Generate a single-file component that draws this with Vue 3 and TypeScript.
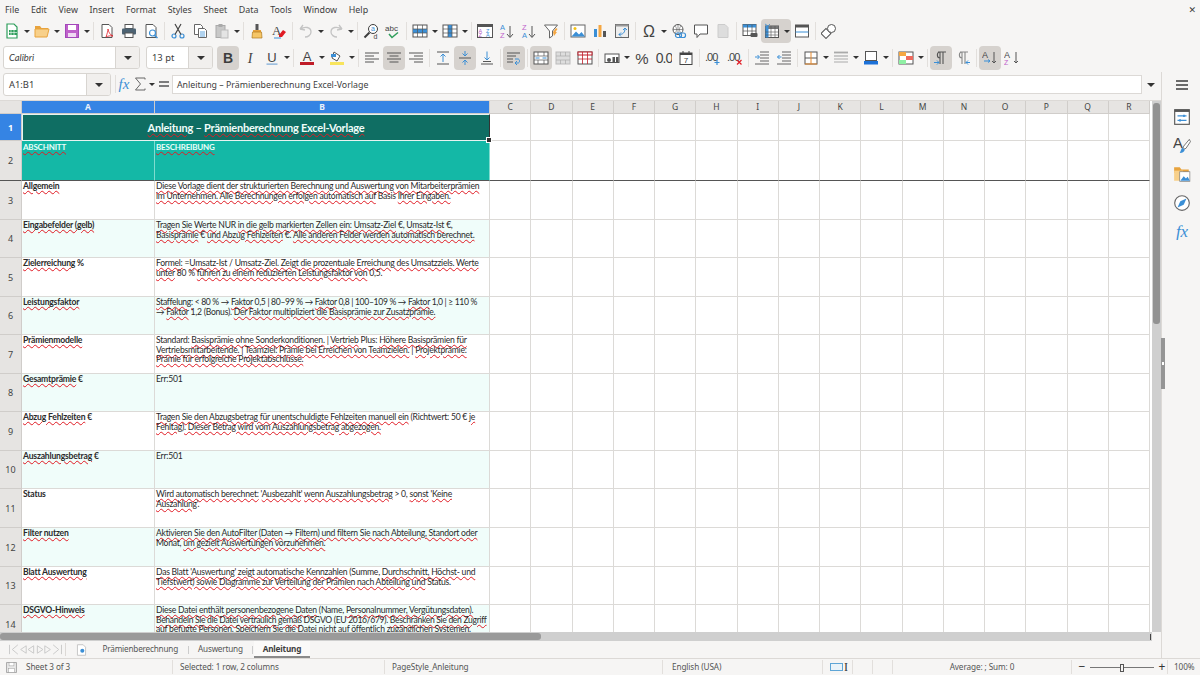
<script setup lang="ts">
type ToolItem = { i?: string; a?: boolean; on?: boolean; sep?: boolean }

const menus = ['File', 'Edit', 'View', 'Insert', 'Format', 'Styles', 'Sheet', 'Data', 'Tools', 'Window', 'Help']

const S = '#3d3d3d'
const B = '#3b8fd6'
const line = (d: string, c = S, w = 1) => `<path d="${d}" fill="none" stroke="${c}" stroke-width="${w}"/>`
const doc = (c = '#555', f = '#fff') => `<path d="M3 1.5h7l3 3v10H3z" fill="${f}" stroke="${c}"/>`

const icons: Record<string, string> = {
  new: `<path d="M3 1h7l3 3v11H3z" fill="#fff" stroke="#2e9e5b" stroke-width="1.2"/><rect x="5" y="7" width="8" height="5" fill="#2e9e5b"/>` + line('M7 7v5M10 7v5M5 9.5h8', '#fff', .6),
  open: `<path d="M1 3h5l1.500 2H14v2H1z" fill="#e8a33d"/><path d="M1 14V6h14l-2 8z" fill="#f8d08a" stroke="#e8a33d"/>`,
  save: `<rect x="1.500" y="1.500" width="13" height="13" fill="#c061cb" stroke="#a347ba"/><rect x="4" y="2" width="8" height="5" fill="#fff"/><rect x="4" y="10" width="8" height="4" fill="#f0d9f3"/>`,
  pdf: doc() + line('M7 14c1-3 2-6 2-8 .5 3 2 6 5 7-3-.5-5 0-7 1z', '#e01b24', .8),
  print: `<rect x="4" y="1.500" width="8" height="4" fill="#fff" stroke="#555"/><rect x="1" y="5.500" width="14" height="6" rx="1" fill="#4d6373"/><rect x="4" y="10" width="8" height="4.500" fill="#fff" stroke="#555"/>`,
  preview: doc() + `<circle cx="9.500" cy="10" r="3" fill="#fff" stroke="${B}" stroke-width="1.200"/>` + line('M11.500 12.500l3 2.500', B, 1.5),
  cut: `<circle cx="4" cy="13" r="2" fill="none" stroke="${B}" stroke-width="1.200"/><circle cx="12" cy="13" r="2" fill="none" stroke="${B}" stroke-width="1.200"/>` + line('M5 11.500L11 1M11 11.500L5 1', '#444', 1.2),
  copy: `<path d="M2.500 1.500h6l2 2v8h-8z" fill="#fff" stroke="#666"/><path d="M6.500 5.500h6l2 2v7h-8z" fill="#fff" stroke="#666"/>` + line('M8 9h5M8 11h5M8 13h5', B, .8),
  paste: `<rect x="2" y="2.500" width="9" height="12" fill="#c8c8c8" stroke="#aaa"/><rect x="4.500" y="1" width="4" height="3" fill="#aaa"/><rect x="7" y="7" width="7" height="8" fill="#e4e4e4" stroke="#bbb"/>`,
  clone: `<rect x="6.500" y="1" width="3" height="6" fill="#555"/><path d="M4 7h8v2H4z" fill="#e8a33d"/><path d="M3.500 9h9l.5 6H3z" fill="#f6c667" stroke="#b07a1e" stroke-width=".7"/>`,
  clear: `<text x="1" y="12" font-size="13" font-family="Liberation Serif" fill="#444">A</text><path d="M8 12l4-5 3 2-4 5H8z" fill="#e01b24"/>` + line('M3 15h7', B, 1),
  undo: line('M2 6l3-4M2 6l5 1M2 6c5-3 11-2 11 3 0 3-3 5-6 5', '#c4c4c4', 1.300),
  redo: line('M14 6l-3-4M14 6l-5 1M14 6C9 3 3 4 3 9c0 3 3 5 6 5', '#c4c4c4', 1.300),
  find: `<circle cx="10" cy="6" r="4.500" fill="#fff" stroke="#3d3d3d"/>` + line('M6.500 9.500L1.500 14.500', S, 2) + `<text x="8" y="8" font-size="7" fill="${B}" font-family="Liberation Sans">a</text><text x="10.500" y="15.500" font-size="7" fill="#444" font-family="Liberation Sans">d</text>`,
  spell: `<text x="0" y="8" font-size="8" fill="#444" font-family="Liberation Sans">abc</text>` + line('M4 11l3 3.500 6-5', '#2e9e5b', 1.5),
  row: `<rect x="1" y="2" width="14" height="12" fill="#fff" stroke="#555"/><rect x="1" y="6" width="14" height="4" fill="${B}"/>` + line('M1 6h14M1 10h14M5.500 2v12M10.500 2v12', '#555', .7),
  col: `<rect x="1" y="2" width="14" height="12" fill="#fff" stroke="#555"/><rect x="6" y="2" width="4" height="12" fill="${B}"/>` + line('M1 6h14M1 10h14M6 2v12M10 2v12', '#555', .7),
  sort: `<rect x=".5" y="1.500" width="15" height="13" fill="#fff" stroke="#555"/><rect x=".5" y="1.500" width="15" height="2.500" fill="#555"/><text x="1.500" y="9.500" font-size="5.500" fill="#b55cc7" font-family="Liberation Sans">A</text><text x="1.500" y="14" font-size="5.500" fill="#b55cc7" font-family="Liberation Sans">Z</text><text x="9" y="9.500" font-size="5.500" fill="${B}" font-family="Liberation Sans">Z</text><text x="9" y="14" font-size="5.500" fill="${B}" font-family="Liberation Sans">A</text>`,
  asc: `<text x="1" y="7" font-size="7.500" fill="${B}" font-family="Liberation Sans">A</text><text x="1" y="15" font-size="7.500" fill="#c061cb" font-family="Liberation Sans">Z</text>` + line('M11 3v11M8 11l3 3.500 3-3.500', '#555', 1),
  desc: `<text x="1" y="7" font-size="7.500" fill="#c061cb" font-family="Liberation Sans">Z</text><text x="1" y="15" font-size="7.500" fill="${B}" font-family="Liberation Sans">A</text>` + line('M11 3v11M8 11l3 3.500 3-3.500', '#555', 1),
  filter: `<path d="M1.500 2h13l-5 6v5l-3 2V8z" fill="#fff" stroke="#666"/><path d="M10 9l3-4 1.500 1-2 3 1.500 0-3 4z" fill="#f5a742"/>`,
  image: `<rect x="1" y="2" width="14" height="12" fill="#fff" stroke="#666"/><circle cx="5" cy="5.500" r="1.500" fill="#f5c211"/><path d="M1.500 13.500l4.500-5 3 3 2.500-2.500 3.500 4.500z" fill="${B}"/>`,
  chart: `<rect x="2" y="6" width="3" height="8" fill="${B}"/><rect x="6.500" y="2" width="3" height="12" fill="#f5a742"/><rect x="11" y="8" width="3" height="6" fill="#555"/>`,
  pivot: `<rect x="1.500" y="1.500" width="13" height="13" fill="#eee" stroke="#666"/><rect x="1.500" y="1.500" width="13" height="2" fill="#999"/>` + line('M5 11.500c4 0 6-2 6-6M9 7l2-2 2 2M7 9.500l-2 2 2 2', B, 1),
  omega: `<text x="8" y="14" text-anchor="middle" font-size="16" fill="#444" font-family="Liberation Sans">Ω</text>`,
  link: `<circle cx="7" cy="6.500" r="5" fill="#fff" stroke="#555"/>` + line('M2 6.500h10M7 1.500v10M4 2.500c2 3 2 5 0 8M10 2.500c-2 3-2 5 0 8', '#555', .6) + `<rect x="4.500" y="10" width="6" height="4.500" rx="2" fill="none" stroke="${B}" stroke-width="1.200"/><rect x="8.500" y="10" width="6" height="4.500" rx="2" fill="none" stroke="${B}" stroke-width="1.200"/>`,
  comment: `<path d="M1.500 2h13v9H7l-3 3.500V11H1.500z" fill="#fff" stroke="#555"/>`,
  headers: `<path d="M3 1.500h7l3 3v10H3z" fill="#ddd" stroke="#ccc"/>`,
  headgrid: `<rect x="1" y="1.500" width="13" height="11" fill="#fff" stroke="#555"/><rect x="1" y="1.500" width="13" height="3" fill="${B}"/>` + line('M1 8h13M5.500 2v10M10 2v10', '#555', .7) + `<rect x="8.500" y="10" width="7" height="4" rx="1" fill="#555"/>`,
  freeze: `<rect x="1.500" y="3" width="13" height="11.500" fill="#fff" stroke="#555"/><rect x="1.500" y="3" width="13" height="3" fill="#777"/><rect x="1.500" y="3" width="3" height="11.500" fill="${B}"/>` + line('M1.500 9h13M1.500 12h13M7 3v11M11 3v11', '#555', .6) + line('M1 1l3 2M6 1l-2 2', B, .8),
  split: `<rect x="1.500" y="2" width="13" height="12" fill="#fff" stroke="#555"/><rect x="1.500" y="2" width="13" height="2.500" fill="#555"/>` + line('M1.500 9h13', B, 1),
  shapes: `<rect x="1.500" y="7" width="7" height="7" fill="#fff" stroke="#555" transform="rotate(45 5 10.500)"/><circle cx="10.500" cy="5.500" r="4" fill="#fff" stroke="#555"/>`,
  bold: `<text x="8" y="13" text-anchor="middle" font-size="14" font-weight="700" fill="#3d3d3d" font-family="Liberation Sans">B</text>`,
  italic: `<text x="8" y="13" text-anchor="middle" font-size="14" font-style="italic" fill="#444" font-family="Liberation Serif">I</text>`,
  under: `<text x="8" y="12" text-anchor="middle" font-size="13" fill="#444" font-family="Liberation Sans">U</text><rect x="2.500" y="13.500" width="11" height="1.200" fill="#7aa9d6"/>`,
  fcolor: `<text x="8" y="11" text-anchor="middle" font-size="13" fill="#444" font-family="Liberation Sans">A</text><rect x="1" y="12" width="14" height="3" fill="#c01c28"/>`,
  bcolor: `<path d="M5 2l6 4-3 5-5-3z" fill="#fff" stroke="#555"/><path d="M2 4h5v3H2z" fill="${B}"/><rect x="1" y="12" width="14" height="3" fill="#f8e45c"/>`,
  left: line('M1 3h14M1 6h9M1 9h14M1 12h9', '#555'),
  center: line('M1 3h14M3.500 6h9M1 9h14M3.500 12h9', '#555'),
  right: line('M1 3h14M6 6h9M1 9h14M6 12h9', '#555'),
  vtop: line('M2 2h12M2 14h12', '#555') + line('M8 12V4M5.500 6.500L8 4l2.500 2.500', B),
  vmid: line('M2 8h12', '#555') + line('M8 1v5M5.500 3.500L8 6l2.500-2.500M8 15v-5M5.500 12.500L8 10l2.500 2.500', B),
  vbot: line('M2 14h12M4 11.500h8', '#555') + line('M8 1.500V10M5.500 7.500L8 10l2.500-2.500', B),
  wrap: line('M1 3h13M1 6h9M1 9h6M1 12h6', '#555') + line('M9 9h3c2 0 2 4 0 4H9.500M11 11l-2 2 2 2', B),
  merge: `<rect x="1" y="2" width="14" height="12" fill="#fff" stroke="#555"/>` + line('M1 6h14M1 10h14M5 2v4M11 2v4M5 10v4M11 10v4', '#555', .7) + line('M2.500 8h4M13.500 8h-4', B, 1.2),
  mergec: `<rect x="1" y="2" width="14" height="12" fill="#ddd" stroke="#bbb"/>` + line('M1 6h14M1 10h14M5.500 2v4M10.500 2v4M5.500 10v4M10.500 10v4', '#aaa', .7),
  unmerge: `<rect x="1" y="2" width="14" height="12" fill="#fff" stroke="#555"/><rect x="1" y="2" width="14" height="3" fill="#fff" stroke="#c01c28"/>` + line('M1 9h14M5.500 2v12M10.500 2v12', '#c01c28', .8),
  cur: `<rect x="1" y="4" width="14" height="8.500" fill="#fff" stroke="#555"/><circle cx="5" cy="10" r="2" fill="#555"/><rect x="8.500" y="7" width="2.500" height="5" fill="#555"/><rect x="12" y="7" width="2.500" height="5" fill="#555"/>`,
  pct: `<text x="8" y="13.500" text-anchor="middle" font-size="15" fill="#444" font-family="Liberation Sans">%</text>`,
  num: `<text x="8" y="13" text-anchor="middle" font-size="14" letter-spacing="-1" fill="#444" font-family="Liberation Sans">0.0</text>`,
  date: `<rect x="2" y="3" width="12" height="11.500" fill="#fff" stroke="#444"/><rect x="2" y="3" width="12" height="2" fill="#444"/><text x="8" y="13" text-anchor="middle" font-size="8" fill="#444" font-family="Liberation Sans">7</text>` + line('M5 1v3M11 1v3', '#444'),
  adddec: `<text x="0" y="11" font-size="11" letter-spacing="-1" fill="#444" font-family="Liberation Sans">.00</text>` + line('M12 10v5M9.500 12.500h5', B, 1.2),
  deldec: `<text x="0" y="11" font-size="11" letter-spacing="-1" fill="#444" font-family="Liberation Sans">.00</text>` + line('M10 10l4.500 4.500M14.500 10L10 14.500', '#e01b24', 1.2),
  indent: line('M6 2h9M6 5h9M6 8h9M6 11h9M1 14h14', '#555', .9) + line('M1 7h4M3.500 5l2 2-2 2', B),
  outdent: line('M6 2h9M6 5h9M6 8h9M6 11h9M1 14h14', '#555', .9) + line('M5.500 7h-4M3.500 5l-2 2 2 2', B),
  border: `<rect x="2" y="2" width="12" height="12" fill="#fff" stroke="#555"/>` + line('M2 8h12', '#555') + line('M8 2v12M2 14h12', '#e68a2e', 1),
  bstyle: line('M1 2.500h14', '#aaa', 1.800) + line('M1 6h14', '#aaa', 1.200) + line('M1 9h14M1 12h14', '#aaa', 1),
  bcol: `<rect x="2.500" y="1.500" width="11" height="9" fill="#fff" stroke="#555"/><rect x="1" y="11" width="14" height="3.500" fill="#1c71d8"/>`,
  cond: `<rect x="1" y="2" width="14" height="12" fill="#fff" stroke="#555"/><rect x="1" y="2" width="7" height="4" fill="#f5a742"/><rect x="8" y="6" width="7" height="4" fill="#ed6a5e"/><rect x="1" y="10" width="7" height="4" fill="#8ff0a4"/>`,
  ltr: line('M7 14V2M10 14V2M5 2h8M7 8C3.500 8 3.500 2 7 2', '#555', 1.1) + line('M1 12.500h5M4 10.500l2 2-2 2', B),
  rtl: line('M7 14V2M10 14V2M5 2h8M7 8C3.500 8 3.500 2 7 2', '#888', 1.1) + line('M15 12.500h-4M13 10.500l-2 2 2 2', B),
  textdir: `<text x="0" y="8" font-size="9" fill="#444" font-family="Liberation Sans">A</text>` + line('M2 11h6M6 9.500l2 1.500-2 1.500', B) + line('M12 2v11M10 11l2 2 2-2', '#555'),
  textdir2: `<text x="0" y="8" font-size="9" fill="#444" font-family="Liberation Sans">A</text><text x="0" y="15" font-size="7" fill="#c061cb" font-family="Liberation Sans">Z</text>` + line('M12 2v11M10 11l2 2 2-2', '#555'),
  menu: line('M2 4h12M2 8h12M2 12h12', '#3d3d3d', 1.500),
  props: `<rect x="1.500" y="1.500" width="13" height="13" fill="#fff" stroke="#555"/><rect x="1.500" y="1.500" width="13" height="2" fill="#555"/>` + line('M4 7h8M4 11h8', B) + `<rect x="9" y="6" width="1.500" height="2" fill="${B}"/><rect x="5.500" y="10" width="1.500" height="2" fill="${B}"/>`,
  styles: `<text x="0" y="11" font-size="13" fill="#444" font-family="Liberation Sans">A</text><path d="M14.500 3l-5 6-1 3 3-1 4-6z" fill="#fff" stroke="#555" stroke-width=".7"/><path d="M6 15c3 0 4-1 4.500-3L8 10.500z" fill="${B}"/>`,
  gallery: `<path d="M1 2h5l1.500 2H14v3H1z" fill="#e8a33d"/><path d="M1 14V5h8v9z" fill="#f8d08a"/><rect x="6" y="6" width="9" height="8.500" fill="#fff" stroke="#777" stroke-width=".6"/><path d="M6.500 14l3-4 2 2 1.500-1.500 2 3.500z" fill="${B}"/>`,
  nav: `<circle cx="8" cy="8" r="6.500" fill="#fff" stroke="#666"/><path d="M12 4L9.500 9.500 4 12l2.500-5.500z" fill="${B}"/>`,
  fx: `<text x="8" y="13" text-anchor="middle" font-size="15" font-style="italic" fill="${B}" font-family="Liberation Serif">fx</text>`,
  sigma: line('M13 3.500V2H3.500L8.500 8l-5 6H13v-1.500', '#666', 1),
  equals: line('M3 6h10M3 10h10', '#555', 1.500),
  savest: `<rect x="2" y="2" width="12" height="12" fill="#e8e8e8" stroke="#999"/><rect x="5" y="2" width="6" height="4" fill="#fff" stroke="#999" stroke-width=".6"/><rect x="4.500" y="9" width="7" height="5" fill="#fff" stroke="#999" stroke-width=".6"/>`,
  addtab: `<path d="M3 1.500h7l3 3v10H3z" fill="#fff" stroke="#bbb"/><circle cx="9" cy="9" r="2.500" fill="${B}"/>`,
}

const sep: ToolItem = { sep: true }
const tools1: ToolItem[] = [
  { i: 'new', a: true }, { i: 'open', a: true }, { i: 'save', a: true }, sep,
  { i: 'pdf' }, { i: 'print' }, { i: 'preview' }, sep,
  { i: 'cut' }, { i: 'copy' }, { i: 'paste', a: true }, sep,
  { i: 'clone' }, { i: 'clear' }, sep,
  { i: 'undo', a: true }, { i: 'redo', a: true }, sep,
  { i: 'find' }, { i: 'spell' }, sep,
  { i: 'row', a: true }, { i: 'col', a: true }, sep,
  { i: 'sort' }, { i: 'asc' }, { i: 'desc' }, { i: 'filter' }, sep,
  { i: 'image' }, { i: 'chart' }, { i: 'pivot' }, sep,
  { i: 'omega', a: true }, { i: 'link' }, { i: 'comment' }, { i: 'headers' }, sep,
  { i: 'headgrid' }, { i: 'freeze', a: true, on: true }, { i: 'split' }, sep,
  { i: 'shapes' },
]
const tools2: ToolItem[] = [
  { i: 'bold', on: true }, { i: 'italic' }, { i: 'under', a: true }, sep,
  { i: 'fcolor', a: true }, { i: 'bcolor', a: true }, sep,
  { i: 'left' }, { i: 'center', on: true }, { i: 'right' }, sep,
  { i: 'vtop' }, { i: 'vmid', on: true }, { i: 'vbot' }, sep,
  { i: 'wrap', on: true }, sep,
  { i: 'merge', on: true }, { i: 'mergec' }, { i: 'unmerge' }, sep,
  { i: 'cur', a: true }, { i: 'pct' }, { i: 'num' }, { i: 'date' }, sep,
  { i: 'adddec' }, { i: 'deldec' }, sep,
  { i: 'indent' }, { i: 'outdent' }, sep,
  { i: 'border', a: true }, { i: 'bstyle', a: true }, { i: 'bcol', a: true }, sep,
  { i: 'cond', a: true }, sep,
  { i: 'ltr', on: true }, { i: 'rtl' }, sep,
  { i: 'textdir', on: true }, { i: 'textdir2' },
]

const extraCols = 'CDEFGHIJKLMNOPQR'.split('')
const sideIcons = ['props', 'styles', 'gallery', 'nav', 'fx']

// [...] markiert die Wörter mit roter Rechtschreib-Wellenlinie, ~ am Anfang = enger gesetzte Zeile
const rows: { n: number; h: number; label: string; text: string[] }[] = [
  { n: 3, h: 39, label: '[Allgemein]', text: ['[Diese Vorlage dient der strukturierten Berechnung und Auswertung von Mitarbeiterprämien]', '[im Unternehmen. Alle Berechnungen erfolgen automatisch auf] Basis [Ihrer Eingaben.]'] },
  { n: 4, h: 38, label: '[Eingabefelder (gelb)]', text: ['[Tragen Sie Werte] NUR [in die gelb markierten Zellen ein: Umsatz-Ziel] €, [Umsatz-Ist] €,', '[Basisprämie] € [und Abzug Fehlzeiten] €. [Alle anderen Felder werden automatisch berechnet.]'] },
  { n: 5, h: 39, label: '[Zielerreichung] %', text: ['[Formel:] =[Umsatz-Ist] / [Umsatz-Ziel. Zeigt die prozentuale Erreichung des Umsatzziels. Werte]', '[unter] 80 % [führen zu einem reduzierten Leistungsfaktor von] 0,5.'] },
  { n: 6, h: 38, label: '[Leistungsfaktor]', text: ['~[Staffelung:] < 80 % → [Faktor] 0,5 | 80–99 % → [Faktor] 0,8 | 100–109 % → [Faktor] 1,0 | ≥ 110 %', '→ [Faktor] 1,2 (Bonus). [Der Faktor multipliziert die Basisprämie zur Zusatzprämie.]'] },
  { n: 7, h: 39, label: '[Prämienmodelle]', text: ['Standard: [Basisprämie ohne Sonderkonditionen.] | [Vertrieb] Plus: [Höhere Basisprämien für]', '[Vertriebsmitarbeitende.] | [Teamziel: Prämie bei Erreichen von Teamzielen.] | [Projektprämie:]', '[Prämie für erfolgreiche Projektabschlüsse.]'] },
  { n: 8, h: 38, label: '[Gesamtprämie] €', text: ['Err:501'] },
  { n: 9, h: 39, label: '[Abzug Fehlzeiten] €', text: ['[Tragen Sie den Abzugsbetrag für unentschuldigte Fehlzeiten manuell ein] (Richtwert: 50 € [je]', '[Fehltag). Dieser Betrag wird vom Auszahlungsbetrag abgezogen.]'] },
  { n: 10, h: 38, label: '[Auszahlungsbetrag] €', text: ['Err:501'] },
  { n: 11, h: 39, label: 'Status', text: ['[Wird automatisch berechnet:] \'[Ausbezahlt]\' [wenn Auszahlungsbetrag] > 0, [sonst] \'[Keine]', '[Auszahlung]\'.'] },
  { n: 12, h: 39, label: '[Filter nutzen]', text: ['[Aktivieren Sie den AutoFilter (Daten] → [Filtern) und filtern Sie nach Abteilung, Standort oder]', 'Monat, [um gezielt Auswertungen vorzunehmen.]'] },
  { n: 13, h: 38, label: '[Blatt Auswertung]', text: ['[Das Blatt \'Auswertung\' zeigt automatische Kennzahlen] (Summe, [Durchschnitt, Höchst- und]', '[Tiefstwert) sowie Diagramme zur Verteilung der Prämien nach Abteilung und] Status.'] },
  { n: 14, h: 39, label: '[DSGVO-Hinweis]', text: ['[Diese Datei enthält personenbezogene Daten] (Name, [Personalnummer, Vergütungsdaten).]', '~[Behandeln Sie die Datei vertraulich gemäß] DSGVO (EU 2016/679). [Beschränken Sie den Zugriff]', '[auf befugte Personen. Speichern Sie die Datei nicht auf öffentlich zugänglichen Systemen.]'] },
]

function parts(s: string) {
  return s.replace(/^~/, '').split(/(\[[^\]]*\])/).filter(Boolean).map((p) =>
    p.startsWith('[') ? { t: p.slice(1, -1), bad: true } : { t: p, bad: false },
  )
}
</script>

<template>
  <div class="app">
    <header class="menubar">
      <span v-for="m in menus" :key="m" class="menu-item">{{ m }}</span>
      <span class="close">✕</span>
    </header>

    <div class="toolbar toolbar--one">
      <template v-for="(t, idx) in tools1" :key="idx">
        <span v-if="t.sep" class="sep" />
        <span v-else class="tool-group" :class="{ 'is-on': t.on }">
          <span class="btn"><svg viewBox="0 0 16 16" class="ico" v-html="icons[t.i!]" /></span>
          <span v-if="t.a" class="caret" />
        </span>
      </template>
    </div>

    <div class="toolbar toolbar--two">
      <div class="combo combo--font"><span class="combo-text combo-text--font">Calibri</span><span class="combo-btn"><i class="caret caret--big" /></span></div>
      <div class="combo combo--size"><span class="combo-text">13 pt</span><span class="combo-btn"><i class="caret caret--big" /></span></div>
      <template v-for="(t, idx) in tools2" :key="idx">
        <span v-if="t.sep" class="sep" />
        <span v-else class="tool-group" :class="{ 'is-on': t.on }">
          <span class="btn"><svg viewBox="0 0 16 16" class="ico" v-html="icons[t.i!]" /></span>
          <span v-if="t.a" class="caret" />
        </span>
      </template>
    </div>

    <div class="workspace">
      <div class="main">
        <div class="formula">
          <div class="combo combo--name"><span class="combo-text">A1:B1</span><span class="combo-btn"><i class="caret caret--big" /></span></div>
          <span class="sep sep--formula" />
          <svg viewBox="0 0 16 16" class="ico" v-html="icons.fx" />
          <svg viewBox="0 0 16 16" class="ico" v-html="icons.sigma" />
          <span class="caret" />
          <svg viewBox="0 0 16 16" class="ico" v-html="icons.equals" />
          <div class="formula-input">Anleitung – Prämienberechnung Excel-Vorlage</div>
          <i class="caret caret--big caret--formula" />
        </div>

        <div class="sheet-row">
          <div class="sheet">
            <div class="grid">
              <div class="corner" />
              <div class="col-head col-head--on">A</div>
              <div class="col-head col-head--on">B</div>
              <div v-for="c in extraCols" :key="c" class="col-head">{{ c }}</div>

              <div class="row-head row-head--on row-h1">1</div>
              <div class="cell-title row-h1">
                <span><span class="bad">Anleitung</span> – <span class="bad">Prämienberechnung</span> <span class="bad">Excel-Vorlage</span></span>
                <i class="sel-handle" />
              </div>
              <div v-for="c in extraCols" :key="c" class="cell row-h1" />

              <div class="row-head row-h2 frozen">2</div>
              <div class="cell-head row-h2 frozen"><span class="bad">ABSCHNITT</span></div>
              <div class="cell-head row-h2 frozen"><span class="bad">BESCHREIBUNG</span></div>
              <div v-for="c in extraCols" :key="c" class="cell row-h2 frozen" />

              <template v-for="r in rows" :key="r.n">
                <div class="row-head" :style="{ height: r.h + 'px' }"><span>{{ r.n }}</span></div>
                <div class="cell cell--text cell--label" :class="{ 'cell--alt': r.n % 2 === 0 }">
                  <template v-for="(p, k) in parts(r.label)" :key="k"><span :class="{ bad: p.bad }">{{ p.t }}</span></template>
                </div>
                <div class="cell cell--text" :class="{ 'cell--alt': r.n % 2 === 0 }">
                  <div v-for="(l, j) in r.text" :key="j" class="text-line" :class="{ 'text-line--tight': l.startsWith('~') }">
                    <template v-for="(p, k) in parts(l)" :key="k"><span :class="{ bad: p.bad }">{{ p.t }}</span></template>
                  </div>
                </div>
                <div v-for="c in extraCols" :key="c" class="cell" />
              </template>
            </div>
          </div>
          <div class="vscroll"><div class="vscroll-thumb" /></div>
        </div>

        <div class="hscroll"><div class="hscroll-thumb" /><i class="hscroll-tick" /></div>

        <div class="tabs">
          <div class="tab-nav">
            <svg viewBox="0 0 60 14" class="tab-nav-ico">
              <path d="M2 2v10M11 2L5 7l6 5M20 3l-6 4 6 4zM28 3l-6 4 6 4zM32 3l6 4-6 4zM40 3l6 4-6 4zM49 2l6 5-6 5M58 2v10" fill="none" stroke="#c8c8c8" />
            </svg>
          </div>
          <svg viewBox="0 0 16 16" class="tab-add" v-html="icons.addtab" />
          <span class="tab">Prämienberechnung</span>
          <span class="tab-sep" />
          <span class="tab">Auswertung</span>
          <span class="tab-sep" />
          <span class="tab tab--on">Anleitung</span>
        </div>
      </div>

      <aside class="sidebar">
        <i class="side-grip" />
        <svg viewBox="0 0 16 16" class="side-menu" v-html="icons.menu" />
        <svg v-for="s in sideIcons" :key="s" viewBox="0 0 16 16" class="side-ico" v-html="icons[s]" />
      </aside>
    </div>

    <footer class="status">
      <div class="st st--save"><svg viewBox="0 0 16 16" class="st-ico" v-html="icons.savest" /><span>Sheet 3 of 3</span></div>
      <div class="st st--sel">Selected: 1 row, 2 columns</div>
      <div class="st st--page">PageStyle_Anleitung</div>
      <div class="st st--lang">English (USA)</div>
      <div class="st st--mode"><i class="mode-box" /><i class="mode-cursor">I</i></div>
      <div class="st st--e1" />
      <div class="st st--e2" />
      <div class="st st--sum">Average: ; Sum: 0</div>
      <div class="st st--zoom">
        <b>−</b>
        <span class="slider"><i /></span>
        <b>+</b>
      </div>
      <div class="st st--pct">100%</div>
    </footer>
  </div>
</template>

<style>
html,
body {
  margin: 0;
  background: #f6f5f4;
}
</style>

<style scoped>
.app {
  width: 1200px;
  height: 675px;
  display: flex;
  flex-direction: column;
  overflow: hidden;
  background: #f6f5f4;
  color: #3d3d3d;
  font-family: "Noto Sans", sans-serif;
  font-size: 9px;
}

.menubar {
  height: 19px;
  flex: none;
  display: flex;
  align-items: center;
  gap: 11.7px;
  padding-left: 5px;
  font-size: 8.9px;
}

.close {
  margin-left: auto;
  margin-right: 4px;
  font-size: 9px;
  font-family: "DejaVu Sans", sans-serif;
}

.toolbar {
  flex: none;
  display: flex;
  align-items: center;
}

.toolbar--one {
  height: 24px;
  padding-left: 1px;
}

.toolbar--two {
  height: 29px;
  padding-left: 3px;
}

.tool-group {
  display: flex;
  align-items: center;
  height: 24px;
  border-radius: 4px;
}

.tool-group.is-on {
  background: #d6d2ce;
}

.btn {
  width: 22px;
  height: 22px;
  display: flex;
  align-items: center;
  justify-content: center;
}

.ico {
  width: 16px;
  height: 16px;
  display: block;
  flex: none;
}

.sep {
  width: 1px;
  height: 18px;
  margin: 0 2px;
  background: #e2dfdc;
  flex: none;
}

.caret {
  display: inline-block;
  width: 8px;
  height: 3px;
  position: relative;
  flex: none;
}

.caret::after {
  content: "";
  position: absolute;
  left: 1px;
  top: 0;
  border-left: 3px solid transparent;
  border-right: 3px solid transparent;
  border-top: 3px solid #333;
}

.caret--big::after {
  left: 0;
  border-left-width: 4px;
  border-right-width: 4px;
  border-top-width: 4px;
}

.combo {
  display: flex;
  height: 23px;
  background: #fff;
  border: 1px solid #d8d5d1;
  border-radius: 3px;
  flex: none;
  box-sizing: border-box;
  overflow: hidden;
}

.combo--font {
  width: 137px;
}

.combo--size {
  width: 67px;
  margin-left: 6px;
  margin-right: 4px;
}

.combo--name {
  width: 108px;
  margin-left: 3px;
}

.combo-text {
  flex: 1;
  line-height: 21px;
  padding-left: 5px;
  font-size: 9.4px;
}

.combo-text--font {
  font-style: italic;
  font-family: Lato, sans-serif;
}

.combo-btn {
  width: 23px;
  display: flex;
  align-items: center;
  justify-content: center;
  background: #f1efed;
  border-left: 1px solid #d8d5d1;
}

.workspace {
  flex: 1;
  min-height: 0;
  display: flex;
}

.main {
  width: 1161px;
  flex: none;
  display: flex;
  flex-direction: column;
  border-right: 1px solid #dcd9d6;
  box-sizing: content-box;
}

.formula {
  height: 29px;
  flex: none;
  box-sizing: border-box;
  display: flex;
  align-items: center;
  padding-bottom: 4px;
  border-bottom: 1px solid #dcd9d6;
}

.sep--formula {
  margin: 0 0 0 4px;
}

.formula-input {
  width: 970px;
  height: 19px;
  box-sizing: border-box;
  line-height: 18px;
  padding-left: 4px;
  background: #fff;
  border: 1px solid #dcd9d6;
  font-size: 8.8px;
}

.caret--formula {
  margin-left: 5px;
}

.sheet-row {
  flex: 1;
  min-height: 0;
  display: flex;
}

.sheet {
  width: 1152px;
  flex: none;
  overflow: hidden;
  background: #fff;
}

.grid {
  display: grid;
  grid-template-columns: 22px 133px 335px repeat(16, 41.25px);
  grid-auto-rows: min-content;
  position: relative;
}

.corner,
.col-head {
  height: 13px;
  background: #e6e4e2;
  border-right: 1px solid #d0cdca;
  border-bottom: 1px solid #d0cdca;
  box-sizing: border-box;
}

.col-head {
  text-align: center;
  line-height: 12px;
  font-size: 8.5px;
  color: #444;
}

.col-head--on {
  background: #3584e4;
  color: #e8f0fb;
  font-weight: 700;
}

.row-head {
  background: #e6e4e2;
  border-right: 1px solid #d0cdca;
  border-bottom: 1px solid #d0cdca;
  box-sizing: border-box;
  display: flex;
  align-items: center;
  justify-content: center;
  font-size: 9px;
  color: #444;
}

.row-head--on {
  background: #3584e4;
  color: #fff;
  font-weight: 700;
}

.row-h1 {
  height: 27px;
}

.row-h2 {
  height: 40px;
}

.frozen {
  border-bottom: 1px solid #555;
}

.cell {
  box-sizing: border-box;
  border-right: 1px solid #dcdad7;
  border-bottom: 1px solid #dcdad7;
  min-width: 0;
  background: #fff;
}

.frozen.cell {
  border-bottom: 1px solid #555;
}

.cell-title {
  grid-column: span 2;
  position: relative;
  box-sizing: border-box;
  background: #0f6e63;
  border: 1px solid #e8f3f1;
  border-right-color: #333;
  color: #f0fdfa;
  display: flex;
  align-items: center;
  justify-content: center;
  font: 700 11px Lato, sans-serif;
  letter-spacing: -0.23px;
}

.sel-handle {
  position: absolute;
  right: -3px;
  bottom: -3px;
  width: 4px;
  height: 4px;
  background: #333;
  border: 1px solid #fff;
}

.cell-head {
  box-sizing: border-box;
  background: #14b8a6;
  border-right: 1px solid #7fdccf;
  color: #eafffb;
  font: 700 8px/10px Lato, sans-serif;
  letter-spacing: -0.2px;
  padding: 1px 1px;
}

.cell--text {
  padding: 1px 1px 0;
  font: 400 8.6px/9.6px Lato, sans-serif;
  letter-spacing: -0.25px;
  color: #2a2a2a;
  overflow: hidden;
  white-space: nowrap;
}

.cell--label {
  font-weight: 700;
  letter-spacing: -0.2px;
}

.cell--alt {
  background: #f0fdfa;
}

.text-line {
  height: 9.6px;
}

.text-line--tight {
  letter-spacing: -0.33px;
}

.bad {
  text-decoration: underline wavy #e01b24;
  text-decoration-thickness: 0.5px;
  text-underline-offset: 1px;
}

.vscroll {
  width: 9px;
  flex: none;
  background: #cfcfcf;
  padding: 2px 1px 0;
  box-sizing: border-box;
}

.vscroll-thumb {
  height: 221px;
  background: #929292;
  border-radius: 3px;
}

.hscroll {
  height: 9px;
  flex: none;
  width: 1152px;
  background: #cfcfcf;
  position: relative;
}

.hscroll-thumb {
  width: 541px;
  height: 7px;
  margin-top: 1px;
  background: #9a9a9a;
  border-radius: 3px;
}

.hscroll-tick {
  position: absolute;
  right: 1px;
  top: 2px;
  width: 1px;
  height: 6px;
  background: #444;
}

.tabs {
  height: 17px;
  flex: none;
  display: flex;
  align-items: center;
  font-size: 8.2px;
  letter-spacing: -0.2px;
}

.tab-nav {
  width: 66px;
  padding-left: 6px;
  box-sizing: border-box;
  display: flex;
  border-right: 1px solid #dcd9d6;
}

.tab-nav-ico {
  width: 59px;
  height: 13px;
}

.tab-add {
  width: 13px;
  height: 14px;
  margin: 0 6px 0 9px;
}

.tab {
  padding: 0 8.5px;
  color: #555;
  height: 17px;
  line-height: 16px;
  box-sizing: border-box;
}

.tab--on {
  font-weight: 700;
  color: #3d3d3d;
  background: #fbfaf9;
  border-bottom: 2px solid #8a8a8a;
}

.tab-sep {
  width: 1px;
  height: 8px;
  margin: 0 1px;
  background: #ccc;
}

.sidebar {
  flex: 1;
  position: relative;
  display: flex;
  flex-direction: column;
  align-items: center;
  padding-top: 5px;
  gap: 10.7px;
  margin-left: 1px;
}

.side-grip {
  position: absolute;
  left: -2px;
  top: 266px;
  width: 4px;
  height: 51px;
  background: #959595;
}

.side-grip::after {
  content: "";
  position: absolute;
  left: 1px;
  top: 24px;
  width: 2px;
  height: 3px;
  background: #fff;
}

.side-menu {
  width: 16px;
  height: 16px;
  margin-bottom: 4px;
}

.side-ico {
  width: 18px;
  height: 18px;
}

.status {
  height: 17px;
  flex: none;
  display: flex;
  align-items: center;
  border-top: 1px solid #dcd9d6;
  box-sizing: border-box;
  font-size: 8.2px;
  letter-spacing: -0.1px;
  color: #555;
}

.st {
  box-sizing: border-box;
  height: 14px;
  line-height: 14px;
  border-right: 1px solid #e2dfdc;
  flex: none;
  padding-left: 7px;
  white-space: nowrap;
}

.st--save {
  width: 173px;
  display: flex;
  align-items: center;
  gap: 8px;
  padding-left: 5px;
}

.st-ico {
  width: 13px;
  height: 13px;
}

.st--sel {
  width: 212px;
}

.st--page {
  width: 278px;
}

.st--lang {
  width: 160px;
  padding-left: 9px;
}

.st--mode {
  width: 30px;
  display: flex;
  align-items: center;
  gap: 1px;
}

.mode-box {
  width: 11px;
  height: 6px;
  border: 1px solid #5ea5d6;
  background: #eaf3f9;
}

.mode-cursor {
  font: 400 12px "Liberation Serif", serif;
  color: #333;
}

.st--e1,
.st--e2 {
  width: 20px;
}

.st--sum {
  width: 179px;
  text-align: center;
  padding-left: 0;
}

.st--zoom {
  width: 96px;
  display: flex;
  align-items: center;
  gap: 4px;
  padding-left: 6px;
  color: #333;
}

.st--zoom b {
  font-size: 12px;
  font-weight: 400;
  width: 8px;
  text-align: center;
}

.slider {
  width: 64px;
  height: 1px;
  background: #777;
  position: relative;
}

.slider i {
  position: absolute;
  left: 30px;
  top: -3px;
  width: 2px;
  height: 6px;
  background: #f6f5f4;
  border: 1px solid #555;
}

.st--pct {
  flex: 1;
  border-right: 0;
  padding-left: 6px;
}
</style>
